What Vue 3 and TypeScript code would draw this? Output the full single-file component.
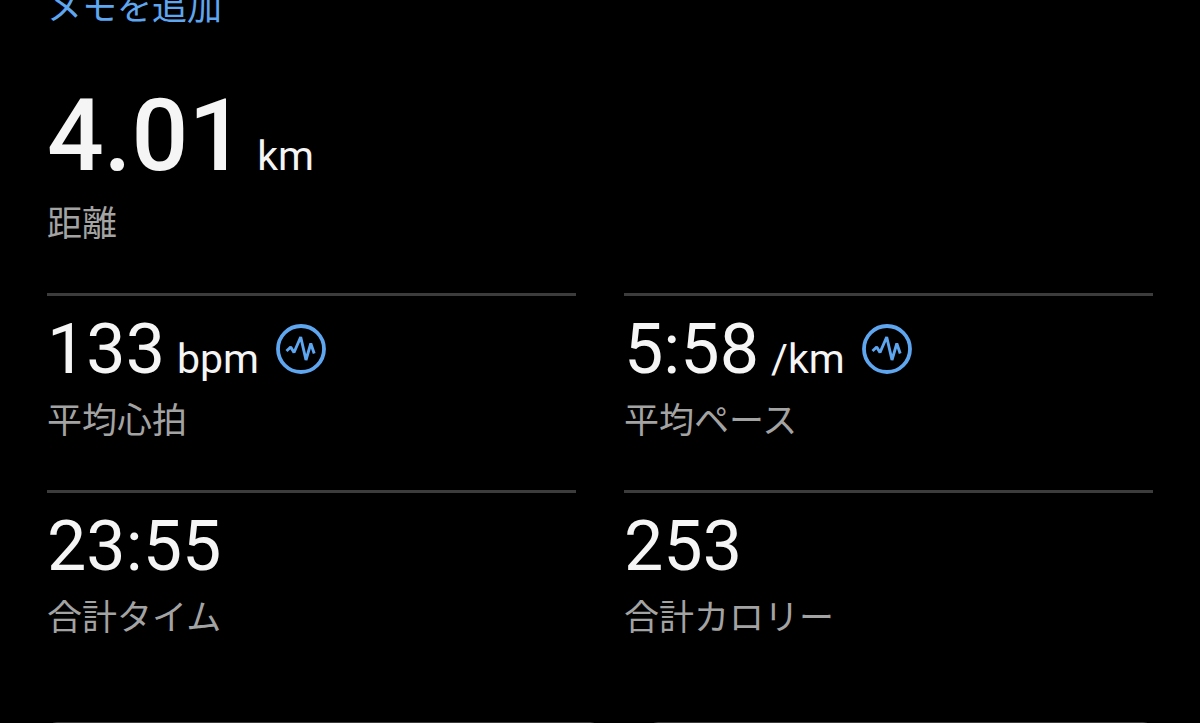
<script setup lang="ts">
interface Stat { value: string; unit?: string; label: string; chart?: boolean }
const stats: Stat[] = [
  { value: '133', unit: 'bpm', label: '平均心拍', chart: true },
  { value: '5:58', unit: '/km', label: '平均ペース', chart: true },
  { value: '23:55', label: '合計タイム' },
  { value: '253', label: '合計カロリー' },
]
</script>

<template>
  <main class="page">
    <a class="memo" href="#">メモを追加</a>
    <section class="hero">
      <p class="reading"><span class="distance">4.01</span><span class="unit">km</span></p>
      <p class="label">距離</p>
    </section>
    <div class="grid">
      <section v-for="s in stats" :key="s.label" class="stat">
        <p class="reading">
          <span class="value">{{ s.value }}</span>
          <span v-if="s.unit" class="unit">{{ s.unit }}</span>
          <button v-if="s.chart" class="chart" type="button" :aria-label="s.label">
            <svg viewBox="0 0 50 50" fill="none" stroke="currentColor">
              <circle cx="25" cy="25" r="23" stroke-width="3.8" />
              <path d="M10.5 27L14.7 23L18 28.5L24.7 13L30 36L34.8 19.5L38.2 29.5" stroke-width="2.9" stroke-linejoin="bevel" />
            </svg>
          </button>
        </p>
        <p class="label">{{ s.label }}</p>
      </section>
    </div>
    <div class="cards">
      <div class="card"></div>
      <div class="card"></div>
    </div>
  </main>
</template>

<style>
html, body { margin: 0; background: #000; }
body { overflow: hidden; }
</style>

<style scoped>
.page { padding: 0 47px; background: #000; color: #f5f5f5; font-family: Roboto, "Noto Sans CJK JP", sans-serif; }
p { margin: 0; }
.memo { display: block; width: max-content; margin-top: -15px; color: #5ea6f0; font-size: 35px; line-height: 48px; text-decoration: none; }
.hero { padding: 47px 0 44px; }
.reading { display: flex; align-items: baseline; }
.distance { font-size: 100px; line-height: 112px; font-weight: 500; margin-right: 12px; }
.unit { font-size: 41px; line-height: 48px; }
.label { margin-top: 7px; color: #a3a3a3; font-size: 35px; line-height: 48px; }
.hero .label { margin-top: 9px; }
.grid { display: grid; grid-template-columns: 1fr 1fr; column-gap: 48px; }
.stat { border-top: 3px solid #3c3c3c; padding: 11px 0 44px; }
.value { font-size: 70px; line-height: 84px; margin-right: 12px; }
.chart { align-self: center; width: 50px; height: 50px; margin-left: 17px; padding: 0; border: 0; background: none; color: #5ea6f0; }
.chart svg { display: block; width: 50px; height: 50px; }
.cards { display: grid; grid-template-columns: 23fr 21fr; column-gap: 48px; margin-top: 35px; }
.card { height: 96px; border: 2px solid #3c3c3c; border-radius: 10px; }
</style>
